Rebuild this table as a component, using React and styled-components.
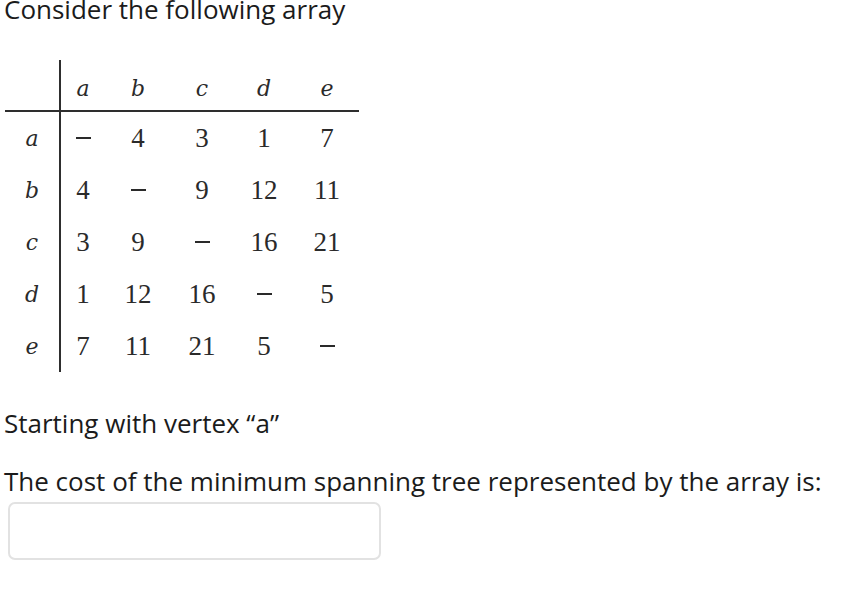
import React from "react";
import styled, { createGlobalStyle } from "styled-components";

const GlobalStyle = createGlobalStyle`
  html, body {
    margin: 0;
    padding: 0;
    background: #ffffff;
  }
  body {
    font-family: "Open Sans", "Noto Sans", sans-serif;
    color: #1b1b1b;
  }
`;

const Page = styled.div`
  width: 854px;
  height: 592px;
  overflow: hidden;
  padding: 0 0 0 4px;
  box-sizing: border-box;
`;

const Title = styled.p`
  margin: -9px 0 0;
  font-size: 26px;
  line-height: 36px;
`;

const Matrix = styled.div`
  margin: 33px 0 0 1px;
  display: grid;
  grid-template-columns: 56px 44px 66px 62px 62px 64px;
  grid-auto-rows: 52px;
  width: 356px;
`;

const Cell = styled.div`
  display: flex;
  align-items: center;
  justify-content: center;
  color: #2a2a2a;
  font-family: ${(p) => (p.$letter ? '"DejaVu Serif", serif' : '"Liberation Serif", serif')};
  font-style: ${(p) => (p.$letter ? "italic" : "normal")};
  font-size: ${(p) => (p.$letter ? "22px" : "27px")};
  border-bottom: ${(p) => (p.$head ? "2px solid #2e2e2e" : "none")};
  border-right: ${(p) => (p.$side ? "2px solid #2e2e2e" : "none")};
  box-sizing: border-box;
  padding-top: ${(p) => (p.$head ? "6px" : "0")};
`;

const Dash = styled.span`
  display: inline-block;
  width: 15px;
  height: 2px;
  background: #2a2a2a;
`;

const Text = styled.p`
  margin: ${(p) => p.$top}px 0 0;
  font-size: 26px;
  line-height: 36px;
`;

const Answer = styled.input`
  display: block;
  margin: 3px 0 0 4px;
  width: 373px;
  height: 58px;
  box-sizing: border-box;
  border: 2px solid #e2e2e2;
  border-radius: 7px;
  background: #fff;
  outline: none;
`;

const labels = ["a", "b", "c", "d", "e"];
const costs = [
  [null, 4, 3, 1, 7],
  [4, null, 9, 12, 11],
  [3, 9, null, 16, 21],
  [1, 12, 16, null, 5],
  [7, 11, 21, 5, null],
];

export default function App() {
  return (
    <Page>
      <GlobalStyle />
      <Title>Consider the following array</Title>
      <Matrix>
        <Cell $head $side />
        {labels.map((l) => (
          <Cell key={"h" + l} $head $letter>
            {l}
          </Cell>
        ))}
        {costs.map((row, i) => (
          <React.Fragment key={labels[i]}>
            <Cell $side $letter>
              {labels[i]}
            </Cell>
            {row.map((v, j) => (
              <Cell key={j}>{v === null ? <Dash /> : v}</Cell>
            ))}
          </React.Fragment>
        ))}
      </Matrix>
      <Text $top={33}>Starting with vertex “a”</Text>
      <Text $top={22}>The cost of the minimum spanning tree represented by the array is:</Text>
      <Answer type="text" />
    </Page>
  );
}
